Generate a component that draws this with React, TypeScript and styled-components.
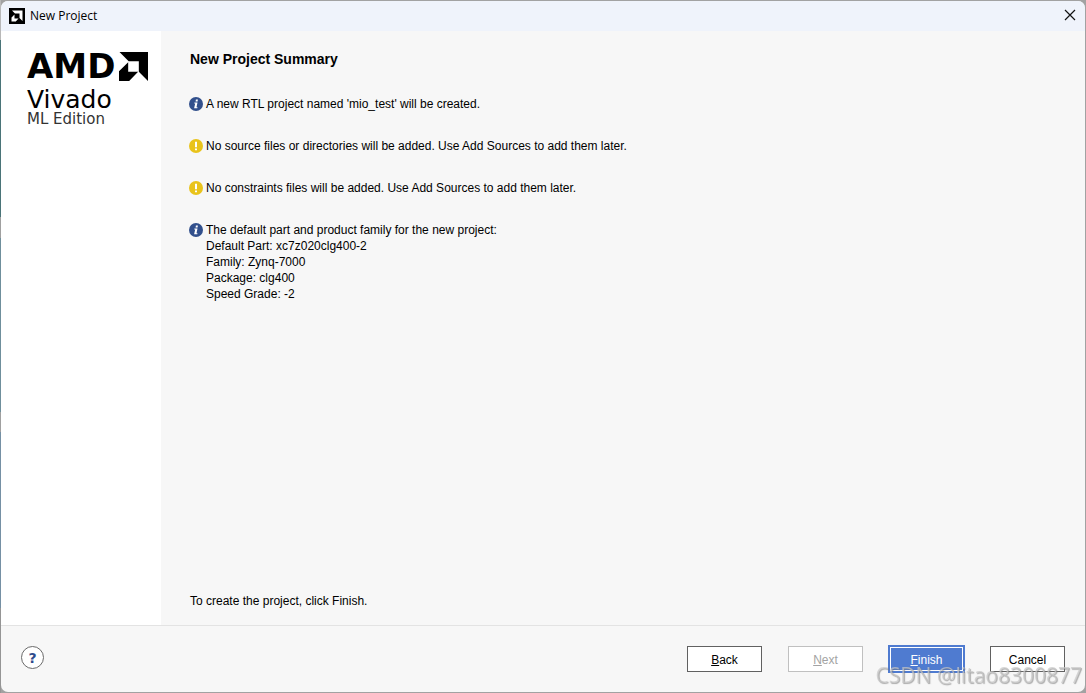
import React from "react";
import styled, { createGlobalStyle } from "styled-components";

const GlobalStyle = createGlobalStyle`
  * { box-sizing: border-box; }
  body { margin: 0; background: #d4d4d4; }
`;

const Desktop = styled.div`
  min-height: 100vh;
  display: flex;
  padding: 1px;
  background: linear-gradient(#b8b8b8 0 40px, #4a7478 40px 217px, #a0a0a0 217px 238px, #6f8f9c 238px 412px, #a0a0a0 412px 432px, #7590a4 432px 608px, #959595 608px) left / 1px 100% no-repeat, #a2a2a2;
`;

const Window = styled.div`
  flex: 1;
  display: flex;
  flex-direction: column;
  overflow: hidden;
  border-radius: 7px;
  background: #f7f7f7;
  color: #000;
  font: 12px/16px "Liberation Sans", Arial, sans-serif;
`;

const TitleBar = styled.header`
  display: flex;
  align-items: center;
  gap: 5px;
  height: 30px;
  padding: 0 7px 0 8px;
  background: #eff3fb;
  font: 12px/16px "Open Sans", "Noto Sans", sans-serif;
`;

const CloseButton = styled.button`
  display: flex;
  margin-left: auto;
  padding: 2px 2px 4px;
  border: 0;
  background: none;
`;

const Body = styled.div`
  flex: 1;
  display: flex;
`;

const Sidebar = styled.aside`
  width: 160px;
  padding: 20px 0 0 26px;
  background: #fff;
`;

const Brand = styled.div`
  display: flex;
  align-items: center;
  gap: 4px;
  height: 30px;
  font: bold 34px/30px "DejaVu Sans", sans-serif;
`;

const ProductName = styled.div`
  margin-top: 7px;
  font: 25px/24px "DejaVu Sans", sans-serif;
`;

const Edition = styled.div`
  color: #333;
  font: 15px/14px "DejaVu Sans", sans-serif;
  white-space: nowrap;
`;

const Content = styled.main`
  flex: 1;
  display: flex;
  flex-direction: column;
  padding: 20px 28px 16px;
`;

const Heading = styled.h1`
  margin: 0 1px 29px;
  font-size: 14px;
  line-height: 16px;
`;

const Messages = styled.ul`
  display: flex;
  flex-direction: column;
  gap: 26px;
  margin: 0;
  padding: 0;
  list-style: none;
`;

const Message = styled.li`
  display: flex;
  gap: 3px;
`;

const StatusSvg = styled.svg`
  flex: none;
  margin-top: 1px;
`;

const Hint = styled.p`
  margin: auto 1px 0;
`;

const Footer = styled.footer`
  display: flex;
  align-items: flex-start;
  gap: 26px;
  height: 67px;
  padding: 20px 20px 0;
  border-top: 1px solid #e3e3e3;
`;

const HelpButton = styled.button`
  width: 23px;
  height: 23px;
  margin-right: auto;
  padding: 0;
  border: 1px solid #6a6a6a;
  border-radius: 50%;
  background: #fff;
  color: #2f4b8c;
  font: bold 14px/20px "DejaVu Sans", sans-serif;
`;

const Button = styled.button<{ $primary?: boolean }>`
  width: 75px;
  height: 26px;
  padding: 2px 0 0;
  border: 1px solid ${(p) => (p.$primary ? "#4f7bd0" : "#616161")};
  outline: ${(p) => (p.$primary ? "1px solid #4f7bd0" : "none")};
  box-shadow: ${(p) => (p.$primary ? "inset 0 0 0 1px #fff" : "none")};
  background: ${(p) => (p.$primary ? "#4f7bd0" : "#fff")};
  color: ${(p) => (p.$primary ? "#fff" : "#000")};
  font: inherit;

  &:disabled {
    border-color: #c0c0c0;
    color: #a3a3a3;
  }
`;

const Watermark = styled.div`
  position: fixed;
  right: 4px;
  bottom: 6px;
  color: rgba(200, 200, 200, 0.7);
  font: 21px/24px "Open Sans", sans-serif;
  text-shadow: 1px 1px 1px rgba(120, 120, 120, 0.6);
  pointer-events: none;
`;

function ArrowMark({ size }: { size: number }) {
  return (
    <svg width={size} height={size} viewBox="0 0 30 30" aria-hidden="true">
      <path d="M0.5 0H30V30L20.5 20.5V9.5H10Z M9.5 10.5V20.5H19.8L10.5 30H0V20Z" />
    </svg>
  );
}

function AppIcon() {
  return (
    <svg width="16" height="16" viewBox="0 0 16 16" aria-hidden="true">
      <path d="M0 0H16V16H0Z" />
      <path fill="#fff" d="M3 2.5H13.5V13L10.5 10V5.5H6Z M5.5 6.5V10.5H9.5L6.8 13.5H2.5V9.5Z" />
    </svg>
  );
}

function StatusIcon({ kind }: { kind: "info" | "warning" }) {
  return (
    <StatusSvg width="14" height="14" viewBox="0 0 14 14" role="img" aria-label={kind}>
      <circle cx="7" cy="7" r="7" fill={kind === "info" ? "#32508c" : "#e9c31b"} />
      {kind === "info" ? (
        <path fill="#fff" d="M6.9 2.6H8.9L8.6 4.4H6.6Z M5.4 5.5H8.5L7.5 10.2H8.5L8.3 11.3H5.1L6.2 6.5H5.2Z" />
      ) : (
        <path fill="#fff" d="M6 2.8H8V8.2H6Z M6 9.4H8V11.3H6Z" />
      )}
    </StatusSvg>
  );
}

export default function App() {
  return (
    <Desktop>
      <GlobalStyle />
      <Window>
        <TitleBar>
          <AppIcon />
          <span>New Project</span>
          <CloseButton aria-label="Close">
            <svg width="12" height="12" viewBox="0 0 12 12" fill="none" stroke="#111" strokeWidth="1.2">
              <path d="M1 1L11 11M11 1L1 11" />
            </svg>
          </CloseButton>
        </TitleBar>
        <Body>
          <Sidebar>
            <Brand>
              AMD
              <ArrowMark size={29} />
            </Brand>
            <ProductName>Vivado</ProductName>
            <Edition>ML Edition</Edition>
          </Sidebar>
          <Content>
            <Heading>New Project Summary</Heading>
            <Messages>
              <Message>
                <StatusIcon kind="info" />
                <span>A new RTL project named 'mio_test' will be created.</span>
              </Message>
              <Message>
                <StatusIcon kind="warning" />
                <span>No source files or directories will be added. Use Add Sources to add them later.</span>
              </Message>
              <Message>
                <StatusIcon kind="warning" />
                <span>No constraints files will be added. Use Add Sources to add them later.</span>
              </Message>
              <Message>
                <StatusIcon kind="info" />
                <div>
                  <div>The default part and product family for the new project:</div>
                  <div>Default Part: xc7z020clg400-2</div>
                  <div>Family: Zynq-7000</div>
                  <div>Package: clg400</div>
                  <div>Speed Grade: -2</div>
                </div>
              </Message>
            </Messages>
            <Hint>To create the project, click Finish.</Hint>
          </Content>
        </Body>
        <Footer>
          <HelpButton aria-label="Help">?</HelpButton>
          <Button><u>B</u>ack</Button>
          <Button disabled><u>N</u>ext</Button>
          <Button $primary><u>F</u>inish</Button>
          <Button>Cancel</Button>
        </Footer>
      </Window>
      <Watermark>CSDN @litao8300877</Watermark>
    </Desktop>
  );
}
